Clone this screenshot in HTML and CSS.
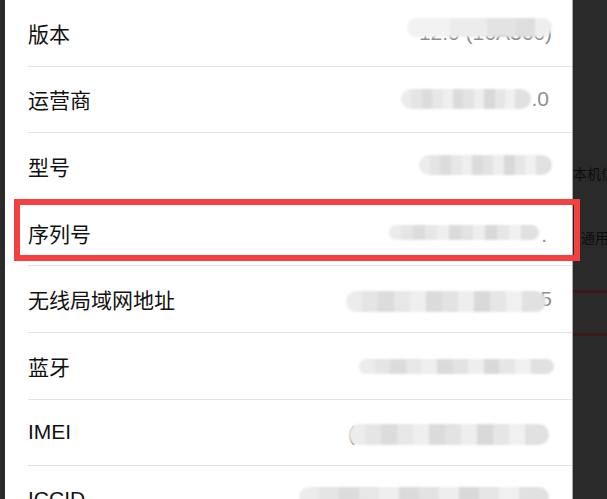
FILE: index.html
```html
<!DOCTYPE html>
<html lang="zh-CN">
<head>
<meta charset="utf-8">
<title>关于本机</title>
<link rel="stylesheet" href="styles.css">
</head>
<body>
<div class="screen">
  <div class="edge-left"></div>
  <div class="panel">
    <div class="row">
      <span class="label">版本</span>
      <span class="value-text">12.0 (16A366)</span>
      <div class="blob blob-over"></div>
    </div>
    <div class="row">
      <span class="label">运营商</span>
      <div class="value r2"><div class="blob"></div><span class="tail">.0</span></div>
    </div>
    <div class="row">
      <span class="label">型号</span>
      <div class="value r3"><div class="blob"></div></div>
    </div>
    <div class="row">
      <span class="label">序列号</span>
      <div class="value r4"><div class="blob"></div><span class="tail">.</span></div>
    </div>
    <div class="row">
      <span class="label">无线局域网地址</span>
      <div class="value r5"><div class="blob"></div><span class="tail">5</span></div>
    </div>
    <div class="row">
      <span class="label">蓝牙</span>
      <div class="value r6"><div class="blob"></div></div>
    </div>
    <div class="row">
      <span class="label">IMEI</span>
      <div class="value r7"><span class="lead">(</span><div class="blob"></div></div>
    </div>
    <div class="row">
      <span class="label">ICCID</span>
      <div class="value r8"><div class="blob"></div></div>
    </div>
  </div>
  <div class="side">
    <div class="side-item s1">本机信息</div>
    <div class="side-item s2">通用</div>
    <div class="side-line l1"></div>
    <div class="side-line l2"></div>
  </div>
  <div class="highlight"></div>
</div>
</body>
</html>
```
FILE: styles.css
```css
html, body {
  margin: 0;
  padding: 0;
  background: #2a2a2a;
}
.screen {
  position: relative;
  width: 607px;
  height: 499px;
  overflow: hidden;
  display: flex;
  font-family: "Liberation Sans", "Noto Sans CJK SC", sans-serif;
}
.edge-left {
  width: 5px;
  flex: none;
  background: #2a2a2a;
}
.panel {
  width: 568px;
  flex: none;
  background: #ffffff;
  border-right: 1px solid #a9a9a9;
  box-sizing: border-box;
}
.row {
  position: relative;
  height: 66.6px;
  margin-left: 23px;
  padding-right: 20px;
  box-sizing: border-box;
  border-bottom: 1px solid #e2e2e2;
  display: flex;
  align-items: center;
  justify-content: space-between;
}
.label {
  font-size: 21px;
  color: #111111;
  white-space: nowrap;
}
.value-text {
  font-size: 21px;
  color: #8e8e8e;
}
.value {
  display: flex;
  align-items: center;
  font-size: 21px;
  color: #8e8e8e;
}
.blob {
  position: relative;
  z-index: 1;
  border-radius: 10px;
  filter: blur(1px);
  background: linear-gradient(90deg,
    #ececec 0 8%, #e5e5e5 8% 16%, #dcdcdc 16% 24%, #e7e7e7 24% 32%,
    #efefef 32% 40%, #dbdbdb 40% 48%, #e3e3e3 48% 56%, #eeeeee 56% 64%,
    #d9d9d9 64% 72%, #e6e6e6 72% 80%, #f0f0f0 80% 88%, #e1e1e1 88% 100%);
}
.blob-over {
  position: absolute;
  right: 20px;
  top: 18px;
  width: 145px;
  height: 19px;
  background: linear-gradient(90deg,
    #f2f2f2 0 30%, #ececec 30% 55%, #e3e3e3 55% 75%, #dedede 75% 88%, #eeeeee 88% 100%);
}
.r2 { margin-right: 3px; }
.r2 .blob { width: 130px; height: 20px; }
.r3 .blob { width: 133px; height: 20px; margin-top: -2px; }
.r4 { margin-right: 5px; }
.r4 .blob { width: 150px; height: 15px; margin-right: 2px; }
.r4 .tail { align-self: flex-end; line-height: 1; margin-bottom: -4px; }
.r5 .blob { width: 200px; height: 21px; margin-right: -6px; margin-top: 5px; }
.r6 { margin-right: -2px; }
.r6 .blob { width: 195px; height: 15px; margin-top: 2px; }
.r7 { margin-right: 3px; }
.r7 .blob { width: 200px; height: 21px; margin-left: -6px; margin-top: 4px; }
.r7 .lead { color: #9a9a9a; margin-top: 4px; }
.r8 { margin-right: 3px; }
.r8 .blob { width: 250px; height: 20px; margin-top: -4px; }
.side {
  flex: 1;
  position: relative;
  background: #2a2a2a;
  overflow: hidden;
}
.side-item {
  position: absolute;
  font-size: 14px;
  color: #0d0d0d;
  white-space: nowrap;
  font-family: "Noto Sans CJK SC", sans-serif;
}
.s1 { left: 0; top: 163px; }
.s2 { left: 8px; top: 227px; }
.side-line {
  position: absolute;
  left: 0;
  right: 0;
  height: 3px;
  background: #3a1818;
}
.l1 { top: 290px; }
.l2 { top: 333px; }
.highlight {
  position: absolute;
  left: 14px;
  top: 199px;
  width: 566px;
  height: 62px;
  box-sizing: border-box;
  border: 6px solid #f4403f;
}
```
